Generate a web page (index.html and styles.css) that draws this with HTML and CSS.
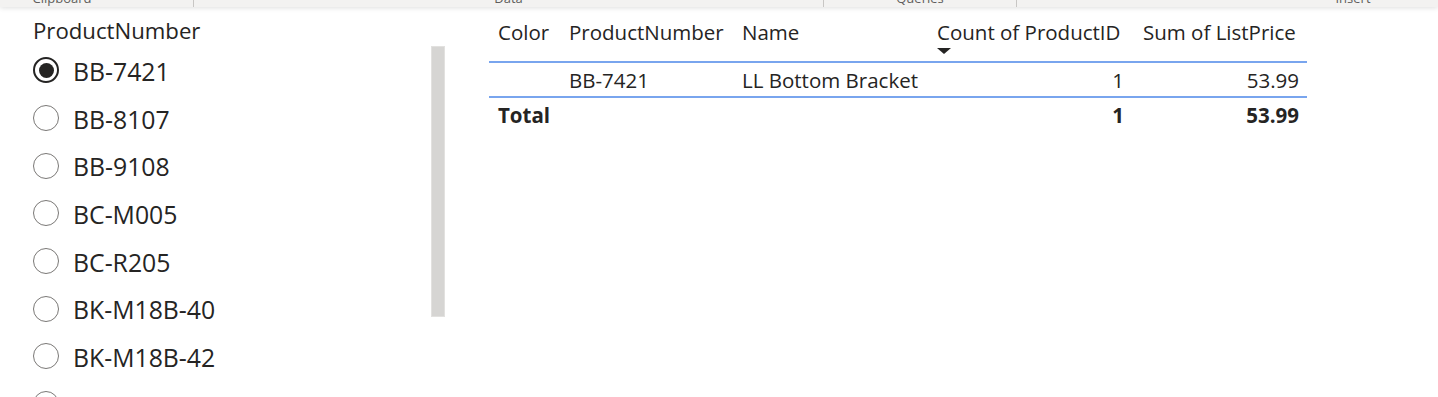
FILE: index.html
```html
<!DOCTYPE html>
<html>
<head>
<meta charset="utf-8">
<link rel="stylesheet" href="styles.css">
</head>
<body>
<div class="ribbon">
  <div class="group g-clip"><span class="glabel">Clipboard</span></div>
  <div class="group g-data"><span class="glabel">Data</span></div>
  <div class="group g-queries"><span class="glabel">Queries</span></div>
  <div class="group g-insert"><span class="glabel">Insert</span></div>
</div>
<div class="page">
  <div class="slicer">
    <div class="slicer-list">
      <div class="slicer-title">ProductNumber</div>
      <div class="item"><span class="radio checked"></span><span class="label">BB-7421</span></div>
      <div class="item"><span class="radio"></span><span class="label">BB-8107</span></div>
      <div class="item"><span class="radio"></span><span class="label">BB-9108</span></div>
      <div class="item"><span class="radio"></span><span class="label">BC-M005</span></div>
      <div class="item"><span class="radio"></span><span class="label">BC-R205</span></div>
      <div class="item"><span class="radio"></span><span class="label">BK-M18B-40</span></div>
      <div class="item"><span class="radio"></span><span class="label">BK-M18B-42</span></div>
      <div class="item"><span class="radio"></span><span class="label">BK-M18B-44</span></div>
    </div>
    <div class="scrollbar"></div>
  </div>
  <div class="visual">
    <table class="grid">
      <colgroup>
        <col class="c1"><col class="c2"><col class="c3"><col class="c4"><col class="c5">
      </colgroup>
      <thead>
        <tr>
          <th>Color</th>
          <th>ProductNumber</th>
          <th>Name</th>
          <th class="sorted">Count of ProductID<div class="sort-arrow"></div></th>
          <th>Sum of ListPrice</th>
        </tr>
      </thead>
      <tbody>
        <tr class="row">
          <td></td>
          <td>BB-7421</td>
          <td>LL Bottom Bracket</td>
          <td class="num">1</td>
          <td class="num last">53.99</td>
        </tr>
        <tr class="total">
          <td>Total</td>
          <td></td>
          <td></td>
          <td class="num">1</td>
          <td class="num last">53.99</td>
        </tr>
      </tbody>
    </table>
  </div>
</div>
</body>
</html>
```
FILE: styles.css
```css
html, body {
  margin: 0;
  padding: 0;
  background: #ffffff;
  overflow: hidden;
  height: 397px;
}

body {
  font-family: "Open Sans", "Noto Sans", sans-serif;
  color: #252423;
}

.ribbon {
  height: 7px;
  background: #f3f2f1;
  display: flex;
  overflow: hidden;
  box-shadow: 0 1px 5px rgba(0, 0, 0, 0.13);
  position: relative;
}

.group {
  flex: none;
  height: 7px;
  display: flex;
  justify-content: center;
  border-right: 1px solid #c8c6c4;
  box-sizing: border-box;
}

.g-clip { width: 194px; padding-right: 69px; }
.g-data { width: 630px; }
.g-queries { width: 193px; }
.g-insert { width: 672px; border-right: none; }

.glabel {
  font-family: "Open Sans", sans-serif;
  font-size: 13px;
  line-height: 14px;
  margin-top: -9px;
  color: #605e5c;
  white-space: nowrap;
}

.page {
  display: flex;
  align-items: flex-start;
}

.slicer {
  width: 445px;
  flex: none;
  display: flex;
  align-items: flex-start;
}

.slicer-list {
  width: 398px;
  padding-left: 33px;
  padding-top: 11px;
  flex: none;
}

.slicer-title {
  font-family: "Open Sans", sans-serif;
  font-size: 22.2px;
  line-height: 25px;
  color: #252423;
  margin-bottom: 4px;
  white-space: nowrap;
}

.item {
  height: 47.7px;
  display: flex;
  align-items: center;
  gap: 14px;
}

.radio {
  width: 26px;
  height: 26px;
  box-sizing: border-box;
  border-radius: 50%;
  border: 1.5px solid #7a7876;
  flex: none;
  display: flex;
  align-items: center;
  justify-content: center;
  margin-top: -1px;
}

.radio.checked {
  border: 2px solid #252423;
}

.radio.checked::after {
  content: "";
  width: 15px;
  height: 15px;
  border-radius: 50%;
  background: #252423;
}

.label {
  font-size: 24.8px;
  line-height: 30px;
  color: #252423;
  white-space: nowrap;
}

.scrollbar {
  width: 14px;
  height: 271px;
  margin-top: 39px;
  box-sizing: border-box;
  background: #d6d5d3;
  border: 1px solid #e2e1df;
  flex: none;
}

.visual {
  margin-left: 44px;
  padding-top: 11px;
}

.grid {
  border-collapse: collapse;
  table-layout: fixed;
  width: 818px;
  font-size: 20.5px;
  line-height: 28px;
}

.c1 { width: 70px; }
.c2 { width: 174px; }
.c3 { width: 194px; }
.c4 { width: 206px; }
.c5 { width: 174px; }

.grid th,
.grid td {
  padding: 0 9px 0 9px;
  white-space: nowrap;
  text-align: left;
  vertical-align: top;
  overflow: visible;
}

.grid th {
  font-weight: 400;
  padding-bottom: 15px;
  border-bottom: 2px solid #79a5ee;
}

.grid th:nth-child(2),
.grid td:nth-child(2) { padding-left: 10px; }

.grid th.sorted {
  padding-bottom: 7px;
  padding-left: 10px;
}

.sort-arrow {
  width: 0;
  height: 0;
  margin-top: 2px;
  border-left: 7px solid transparent;
  border-right: 7px solid transparent;
  border-top: 6px solid #252423;
}

.grid th:last-child,
.grid td:last-child { padding-left: 10px; }

.row td {
  padding-top: 3px;
  padding-bottom: 2px;
  border-bottom: 2px solid #79a5ee;
}

.total td {
  padding-top: 3px;
  font-weight: 700;
}

.grid td.num {
  text-align: right;
}

.grid td.num.last {
  padding-right: 8px;
}
```
